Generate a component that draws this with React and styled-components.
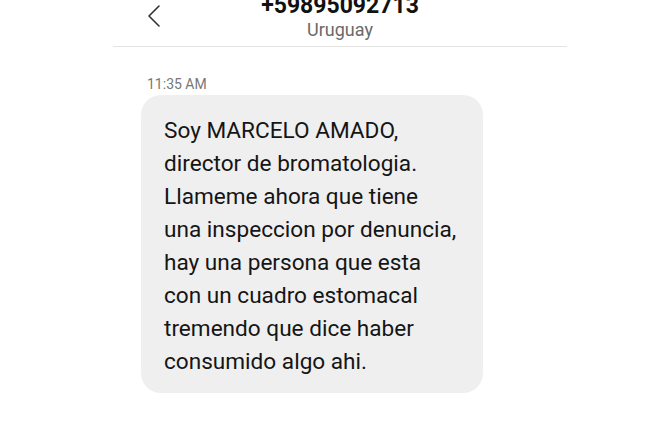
import React from "react";
import styled, { createGlobalStyle } from "styled-components";

const GlobalStyle = createGlobalStyle`
  html, body {
    margin: 0;
    padding: 0;
    background: #ffffff;
    font-family: Roboto, "Liberation Sans", sans-serif;
    overflow: hidden;
  }
`;

const lines = [
  "Soy MARCELO AMADO,",
  "director de bromatologia.",
  "Llameme ahora que tiene",
  "una inspeccion por denuncia,",
  "hay una persona que esta",
  "con un cuadro estomacal",
  "tremendo que dice haber",
  "consumido algo ahi.",
];

const App = () => {
  return (
    <>
      <GlobalStyle />
      <Screen>
        <Column>
          <Header>
            <BackButton aria-label="Back">
              <svg width="14" height="22" viewBox="0 0 14 22" fill="none">
                <path
                  d="M12 1 L2 11 L12 21"
                  stroke="#333"
                  strokeWidth="1.6"
                  strokeLinecap="round"
                  strokeLinejoin="round"
                />
              </svg>
            </BackButton>
            <TitleBlock>
              <Number>+59895092713</Number>
              <Country>Uruguay</Country>
            </TitleBlock>
            <span />
          </Header>
          <Thread>
            <Time>11:35 AM</Time>
            <Bubble>
              {lines.map((l) => (
                <Line key={l}>{l}</Line>
              ))}
            </Bubble>
          </Thread>
        </Column>
      </Screen>
    </>
  );
};

const Screen = styled.div`
  width: 658px;
  height: 425px;
  background: #fff;
`;

const Column = styled.div`
  margin-left: 113px;
  width: 454px;
`;

const Header = styled.header`
  display: grid;
  grid-template-columns: 68px 1fr 68px;
  height: 46px;
  border-bottom: 1.5px solid #e4e4e4;
`;

const BackButton = styled.div`
  padding-left: 34px;
  padding-top: 5px;
  color: #333;
`;

const TitleBlock = styled.div`
  display: flex;
  flex-direction: column;
  align-items: center;
  margin-top: -7px;
`;

const Number = styled.div`
  font-size: 23px;
  font-weight: 700;
  line-height: 26px;
  color: #111;
`;

const Country = styled.div`
  font-size: 18px;
  line-height: 20px;
  margin-top: 1px;
  color: #6a6a6a;
`;

const Thread = styled.div`
  display: flex;
  flex-direction: column;
  align-items: flex-start;
  padding-left: 28px;
  padding-top: 29px;
`;

const Time = styled.div`
  font-size: 14px;
  line-height: 16px;
  color: #777;
  margin-left: 6px;
  margin-bottom: 3px;
`;

const Bubble = styled.div`
  width: 342px;
  box-sizing: border-box;
  background: #efefef;
  border-radius: 20px;
  padding: 19px 23px 15px;
`;

const Line = styled.div`
  font-size: 22.6px;
  line-height: 33px;
  color: #151515;
  white-space: nowrap;
`;

export default App;
